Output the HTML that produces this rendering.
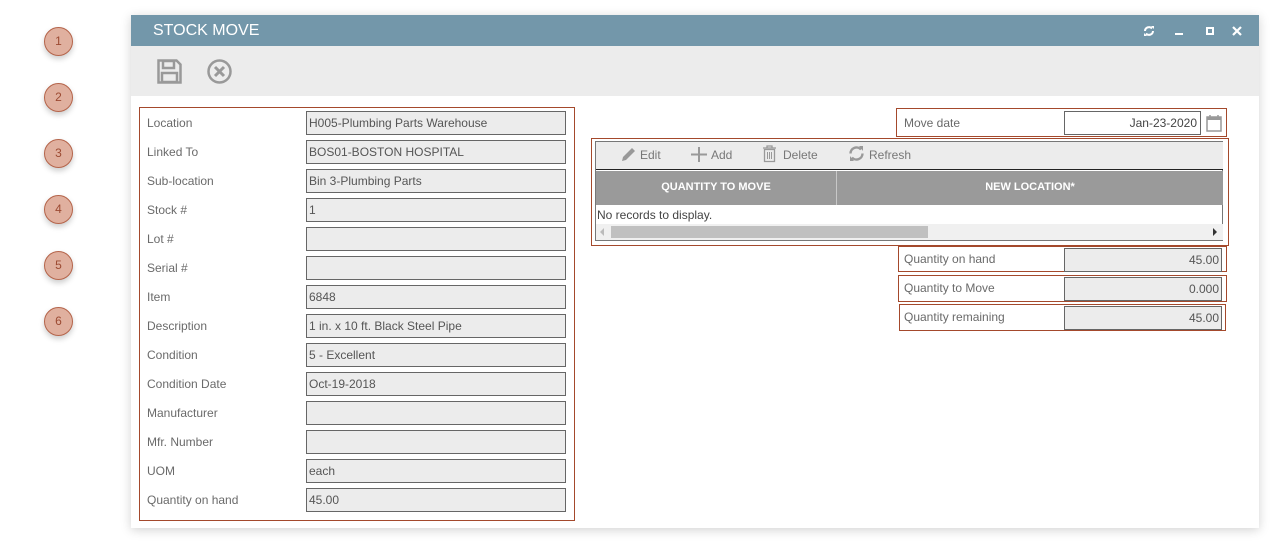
<!DOCTYPE html>
<html><head><style>
*{box-sizing:border-box;margin:0;padding:0}
body{width:1278px;height:552px;background:#fff;position:relative;font-family:"Liberation Sans",sans-serif;overflow:hidden;color:#555}
.c{position:absolute;left:44px;width:29px;height:29px;border-radius:50%;background:#e0b09f;border:1.5px solid #b5644a;color:#9c4a32;font-size:12px;text-align:center;line-height:26px;box-shadow:0 3px 6px rgba(0,0,0,.2)}
.win{position:absolute;left:131px;top:15px;width:1128px;height:513px;background:#fff;box-shadow:0 2px 10px rgba(0,0,0,.18)}
.tb{position:absolute;left:0;top:0;width:100%;height:31px;background:#7397aa;color:#fff;font-size:16px;padding-left:22px;line-height:31px}
.tool{position:absolute;left:0;top:31px;width:100%;height:50px;background:#ececec}
.a{position:absolute}
.box{position:absolute;border:1px solid #a4492c}
.lab{position:absolute;font-size:12px;color:#6a6a6a}
.inp{position:absolute;height:24px;border:1px solid #666;background:#ececec;font-size:12px;padding-left:2px;line-height:22px;color:#555}
</style></head><body>
<div class="c" style="top:27px">1</div>
<div class="c" style="top:83px">2</div>
<div class="c" style="top:139px">3</div>
<div class="c" style="top:195px">4</div>
<div class="c" style="top:251px">5</div>
<div class="c" style="top:307px">6</div>
<div class="win">
<div class="tb">STOCK MOVE
<svg class="a" style="left:1012px;top:10px" width="12" height="12" viewBox="0 0 12 12"><path d="M2 6a4 4 0 0 1 7-2.5M10 6a4 4 0 0 1-7 2.5" stroke="#fff" stroke-width="2" fill="none"/><path d="M8 1l3 0 0 3z M4 11l-3 0 0-3z" fill="#fff"/></svg>
<div class="a" style="left:1044px;top:18px;width:8px;height:2px;background:#fff"></div>
<div class="a" style="left:1075px;top:12px;width:8px;height:8px;border:2px solid #fff"></div>
<svg class="a" style="left:1101px;top:11px" width="10" height="10"><path d="M1 1L9 9M9 1L1 9" stroke="#fff" stroke-width="2.2"/></svg>
</div>
<div class="tool">
<svg class="a" style="left:26px;top:13px" width="25" height="25" viewBox="0 0 25 25"><path d="M1.5 1.5h18l4 4v18h-22z" fill="none" stroke="#999" stroke-width="2.5"/><rect x="6" y="2" width="11" height="7" fill="none" stroke="#999" stroke-width="2.5"/><rect x="5" y="14" width="15" height="9" fill="none" stroke="#999" stroke-width="2.5"/></svg>
<svg class="a" style="left:76px;top:13px" width="25" height="25" viewBox="0 0 25 25"><circle cx="12.5" cy="12.5" r="11" fill="none" stroke="#999" stroke-width="2.5"/><path d="M8 8l9 9M17 8l-9 9" stroke="#999" stroke-width="3"/></svg>
</div>
</div>
<div class="box" style="left:139px;top:107px;width:436px;height:414px"></div>
<div class="lab" style="left:147px;top:116px">Location</div><div class="inp" style="left:306px;top:111px;width:260px">H005-Plumbing Parts Warehouse</div>
<div class="lab" style="left:147px;top:145px">Linked To</div><div class="inp" style="left:306px;top:140px;width:260px">BOS01-BOSTON HOSPITAL</div>
<div class="lab" style="left:147px;top:174px">Sub-location</div><div class="inp" style="left:306px;top:169px;width:260px">Bin 3-Plumbing Parts</div>
<div class="lab" style="left:147px;top:203px">Stock #</div><div class="inp" style="left:306px;top:198px;width:260px">1</div>
<div class="lab" style="left:147px;top:232px">Lot #</div><div class="inp" style="left:306px;top:227px;width:260px"></div>
<div class="lab" style="left:147px;top:261px">Serial #</div><div class="inp" style="left:306px;top:256px;width:260px"></div>
<div class="lab" style="left:147px;top:290px">Item</div><div class="inp" style="left:306px;top:285px;width:260px">6848</div>
<div class="lab" style="left:147px;top:319px">Description</div><div class="inp" style="left:306px;top:314px;width:260px">1 in. x 10 ft. Black Steel Pipe</div>
<div class="lab" style="left:147px;top:348px">Condition</div><div class="inp" style="left:306px;top:343px;width:260px">5 - Excellent</div>
<div class="lab" style="left:147px;top:377px">Condition Date</div><div class="inp" style="left:306px;top:372px;width:260px">Oct-19-2018</div>
<div class="lab" style="left:147px;top:406px">Manufacturer</div><div class="inp" style="left:306px;top:401px;width:260px"></div>
<div class="lab" style="left:147px;top:435px">Mfr. Number</div><div class="inp" style="left:306px;top:430px;width:260px"></div>
<div class="lab" style="left:147px;top:464px">UOM</div><div class="inp" style="left:306px;top:459px;width:260px">each</div>
<div class="lab" style="left:147px;top:493px">Quantity on hand</div><div class="inp" style="left:306px;top:488px;width:260px">45.00</div>

<div class="box" style="left:896px;top:108px;width:331px;height:29px"></div>
<div class="lab" style="left:904px;top:116px">Move date</div>
<div class="inp" style="left:1064px;top:111px;width:137px;background:#fff;text-align:right;padding-right:3px;color:#444">Jan-23-2020</div>
<svg class="a" style="left:1206px;top:114px" width="16" height="18"><rect x="1" y="3" width="14" height="14" fill="none" stroke="#999" stroke-width="1.5"/><rect x="1" y="3" width="14" height="3" fill="#999"/><path d="M4 1v4M12 1v4" stroke="#999" stroke-width="1.5"/></svg>

<div class="box" style="left:591px;top:138px;width:638px;height:108px"></div>
<div class="a" style="left:595px;top:141px;width:628px;height:100px;border:1px solid #777;background:#fff"></div>
<div class="a" style="left:596px;top:142px;width:627px;height:28px;background:#ececec;border-bottom:1px solid #222;font-size:12px;color:#777">
<svg class="a" style="left:24px;top:4px" width="16" height="17"><path d="M2 15l1-4 9-9 3 3-9 9z" fill="#999"/></svg><span class="a" style="left:44px;top:6px">Edit</span>
<svg class="a" style="left:95px;top:4px" width="16" height="17"><path d="M8 1v15M0 8.5h16" stroke="#999" stroke-width="2"/></svg><span class="a" style="left:115px;top:6px">Add</span>
<svg class="a" style="left:166px;top:3px" width="15" height="18"><path d="M1 3h13M5 3V1h5v2M2.5 4.5h10v12h-10z" fill="none" stroke="#999" stroke-width="1.3"/><path d="M5.5 7v7M7.5 7v7M9.5 7v7" stroke="#999"/></svg><span class="a" style="left:187px;top:6px">Delete</span>
<svg class="a" style="left:252px;top:3px" width="17" height="17" viewBox="0 0 17 17"><path d="M2.5 8.5a6 6 0 0 1 10.5-4M14.5 8.5a6 6 0 0 1-10.5 4" stroke="#999" stroke-width="2.4" fill="none"/><path d="M11 1l4 0 0 5z M6 16l-4 0 0-5z" fill="#999"/></svg><span class="a" style="left:273px;top:6px">Refresh</span>
</div>
<div class="a" style="left:596px;top:171px;width:627px;height:34px;background:#9a9a9a;color:#fff;font-size:11px;font-weight:bold">
<span class="a" style="left:0;width:240px;text-align:center;top:10px">QUANTITY TO MOVE</span>
<div class="a" style="left:240px;top:0;width:1px;height:34px;background:#c8c8c8"></div>
<span class="a" style="left:241px;width:386px;text-align:center;top:10px">NEW LOCATION*</span>
</div>
<div class="a" style="left:597px;top:208px;font-size:12px;color:#444">No records to display.</div>
<div class="a" style="left:596px;top:224px;width:627px;height:16px;background:#f0f0f0"></div>
<div class="a" style="left:611px;top:226px;width:317px;height:12px;background:#c0c0c0"></div>
<div class="a" style="left:600px;top:228px;width:0;height:0;border:4px solid transparent;border-right-color:#bbb;border-left:0"></div>
<div class="a" style="left:1213px;top:228px;width:0;height:0;border:4px solid transparent;border-left-color:#333;border-right:0"></div>

<div class="box" style="left:898px;top:246px;width:329px;height:26px"></div>
<div class="lab" style="left:904px;top:252px">Quantity on hand</div><div class="inp" style="left:1064px;top:248px;width:158px;text-align:right;padding-right:2px">45.00</div>
<div class="box" style="left:898px;top:275px;width:329px;height:27px"></div>
<div class="lab" style="left:904px;top:281px">Quantity to Move</div><div class="inp" style="left:1064px;top:277px;width:158px;text-align:right;padding-right:2px">0.000</div>
<div class="box" style="left:899px;top:304px;width:327px;height:27px"></div>
<div class="lab" style="left:904px;top:310px">Quantity remaining</div><div class="inp" style="left:1064px;top:306px;width:158px;text-align:right;padding-right:2px">45.00</div>
</body></html>
